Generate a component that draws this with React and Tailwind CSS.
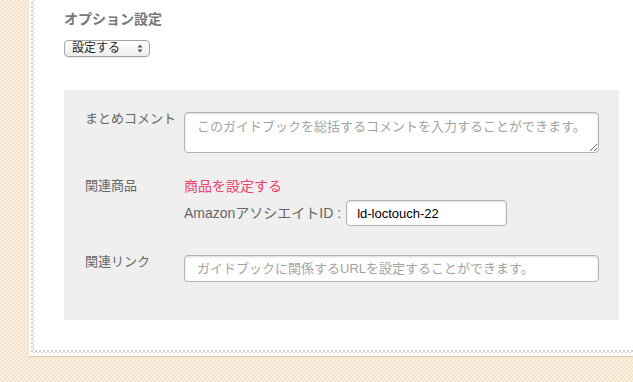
export default function App() {
  const font = "font-['Liberation_Sans','Noto_Sans_CJK_JP',sans-serif]";
  return (
    <div
      className={`w-[633px] h-[382px] overflow-hidden bg-[#f6ead6] bg-[conic-gradient(#f3e5cb_25%,#f8efe0_0_50%,#f3e5cb_0_75%,#f8efe0_0)] bg-[length:4px_4px] ${font}`}
    >
      <div className="ml-[29px] h-[356px] bg-white pl-[2px] pb-[3px] shadow-[0_1px_1px_#e0cfae]">
        <div className="h-full bg-white bg-[conic-gradient(#d2d2d2_25%,#ffffff_0_50%,#d2d2d2_0_75%,#ffffff_0)] bg-[length:4px_4px] pl-[3px] pb-[3px]">
          <div className="h-full bg-white pl-[30px] pr-[14px] pt-[9px]">
            <h2 className="text-[14px] leading-[20px] font-bold text-[#777777]">オプション設定</h2>
            <div className="mt-[11px] w-[86px] h-[17px] border border-[#a4a4a4] rounded-[4px] bg-gradient-to-b from-white to-[#ededed] flex items-center pl-[7px] pr-[6px] justify-between shadow-[0_1px_0_rgba(0,0,0,0.06)]">
              <span className="text-[12px] leading-[15px] text-[#222]">設定する</span>
              <svg width="6" height="9" viewBox="0 0 6 9">
                <path d="M3 0.5 L5.5 3.5 L0.5 3.5 Z" fill="#555" />
                <path d="M3 8.5 L5.5 5.5 L0.5 5.5 Z" fill="#555" />
              </svg>
            </div>
            <div className="mt-[33px] h-[230px] bg-[#efefef] pl-[21px] pt-[22px]">
              <div className="flex items-start">
                <div className="w-[99px] -mt-[2px] text-[13px] leading-[18px] text-[#666666]">まとめコメント</div>
                <textarea
                  className={`w-[415px] h-[41px] border border-[#b3b3b3] rounded-[4px] bg-white pl-[12px] pt-[5px] text-[13px] leading-[17px] text-[#333] placeholder:text-[#a3a3a3] shadow-[inset_0_1px_2px_rgba(0,0,0,0.15)] outline-none ${font}`}
                  placeholder="このガイドブックを総括するコメントを入力することができます。"
                />
              </div>
              <div className="flex items-start mt-[24px]">
                <div className="w-[99px] text-[13px] leading-[18px] text-[#666666]">関連商品</div>
                <div className="flex flex-col">
                  <div className="text-[14px] leading-[18px] text-[#f0406a]">商品を設定する</div>
                  <div className="mt-[5px] flex items-center gap-[5px]">
                    <span className="text-[14px] leading-[18px] text-[#666666]">AmazonアソシエイトID :</span>
                    <input
                      className={`w-[161px] h-[26px] border border-[#b3b3b3] rounded-[4px] bg-white pl-[10px] text-[13px] text-black shadow-[inset_0_1px_2px_rgba(0,0,0,0.12)] outline-none ${font}`}
                      defaultValue="ld-loctouch-22"
                    />
                  </div>
                </div>
              </div>
              <div className="flex items-start mt-[29px]">
                <div className="w-[99px] -mt-[2px] text-[13px] leading-[18px] text-[#666666]">関連リンク</div>
                <input
                  className={`w-[415px] h-[27px] border border-[#b3b3b3] rounded-[4px] bg-white pl-[12px] text-[13px] text-[#333] placeholder:text-[#a3a3a3] shadow-[inset_0_1px_2px_rgba(0,0,0,0.15)] outline-none ${font}`}
                  placeholder="ガイドブックに関係するURLを設定することができます。"
                />
              </div>
            </div>
          </div>
        </div>
      </div>
    </div>
  );
}
